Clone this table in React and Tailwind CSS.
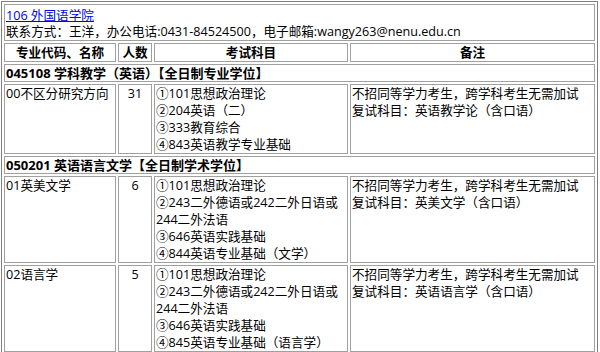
const rows = [
  {
    section: "045108 学科教学（英语）【全日制专业学位】",
    items: [
      {
        name: "00不区分研究方向",
        count: "31",
        subjects: ["①101思想政治理论", "②204英语（二）", "③333教育综合", "④843英语教学专业基础"],
        notes: ["不招同等学力考生，跨学科考生无需加试", "复试科目：英语教学论（含口语）"],
      },
    ],
  },
  {
    section: "050201 英语语言文学【全日制学术学位】",
    items: [
      {
        name: "01英美文学",
        count: "6",
        subjects: [
          "①101思想政治理论",
          "②243二外德语或242二外日语或",
          "244二外法语",
          "③646英语实践基础",
          "④844英语专业基础（文学）",
        ],
        notes: ["不招同等学力考生，跨学科考生无需加试", "复试科目：英美文学（含口语）"],
      },
      {
        name: "02语言学",
        count: "5",
        subjects: [
          "①101思想政治理论",
          "②243二外德语或242二外日语或",
          "244二外法语",
          "③646英语实践基础",
          "④845英语专业基础（语言学）",
        ],
        notes: ["不招同等学力考生，跨学科考生无需加试", "复试科目：英语语言学（含口语）"],
      },
    ],
  },
];

const cell = "border border-[#a0a0a0] px-[1px] py-0 align-top";
const line = "h-[17px] whitespace-nowrap";

export default function App() {
  return (
    <div className="bg-white w-[600px] h-[352px] overflow-hidden pl-[1px] pt-[1px] text-[12.6px] leading-[17px] text-black font-['Open_Sans','Noto_Sans_CJK_SC',sans-serif]">
      <table className="w-[597px] table-fixed border-separate border-spacing-[2px] border border-[#808080]">
        <colgroup>
          <col className="w-[112px]" />
          <col className="w-[34px]" />
          <col className="w-[194px]" />
          <col />
        </colgroup>
        <tbody>
          <tr>
            <td colSpan={4} className={`${cell} pt-[2px]`}>
              <div className="h-[16px]">
                <a href="#" className="text-[#0000ee] underline">106 外国语学院</a>
              </div>
              <div className={line}>联系方式：王洋，办公电话:0431-84524500，电子邮箱:wangy263@nenu.edu.cn</div>
            </td>
          </tr>
          <tr className="font-bold text-center">
            <td className={cell}><div className={line}>专业代码、名称</div></td>
            <td className={cell}><div className={line}>人数</div></td>
            <td className={cell}><div className={line}>考试科目</div></td>
            <td className={cell}><div className={line}>备注</div></td>
          </tr>
          {rows.map((group) => (
            <Group key={group.section} group={group} />
          ))}
        </tbody>
      </table>
    </div>
  );
}

function Group({ group }) {
  return (
    <>
      <tr>
        <td colSpan={4} className={`${cell} font-bold`}>
          <div className="h-[16px] leading-[16px] whitespace-nowrap text-[13px]">{group.section}</div>
        </td>
      </tr>
      {group.items.map((item) => (
        <tr key={item.name}>
          <td className={cell}><div className={line}>{item.name}</div></td>
          <td className={`${cell} text-center`}><div className={line}>{item.count}</div></td>
          <td className={cell}>
            {item.subjects.map((s) => (
              <div key={s} className={line}>{s}</div>
            ))}
          </td>
          <td className={cell}>
            {item.notes.map((n) => (
              <div key={n} className={line}>{n}</div>
            ))}
          </td>
        </tr>
      ))}
    </>
  );
}
